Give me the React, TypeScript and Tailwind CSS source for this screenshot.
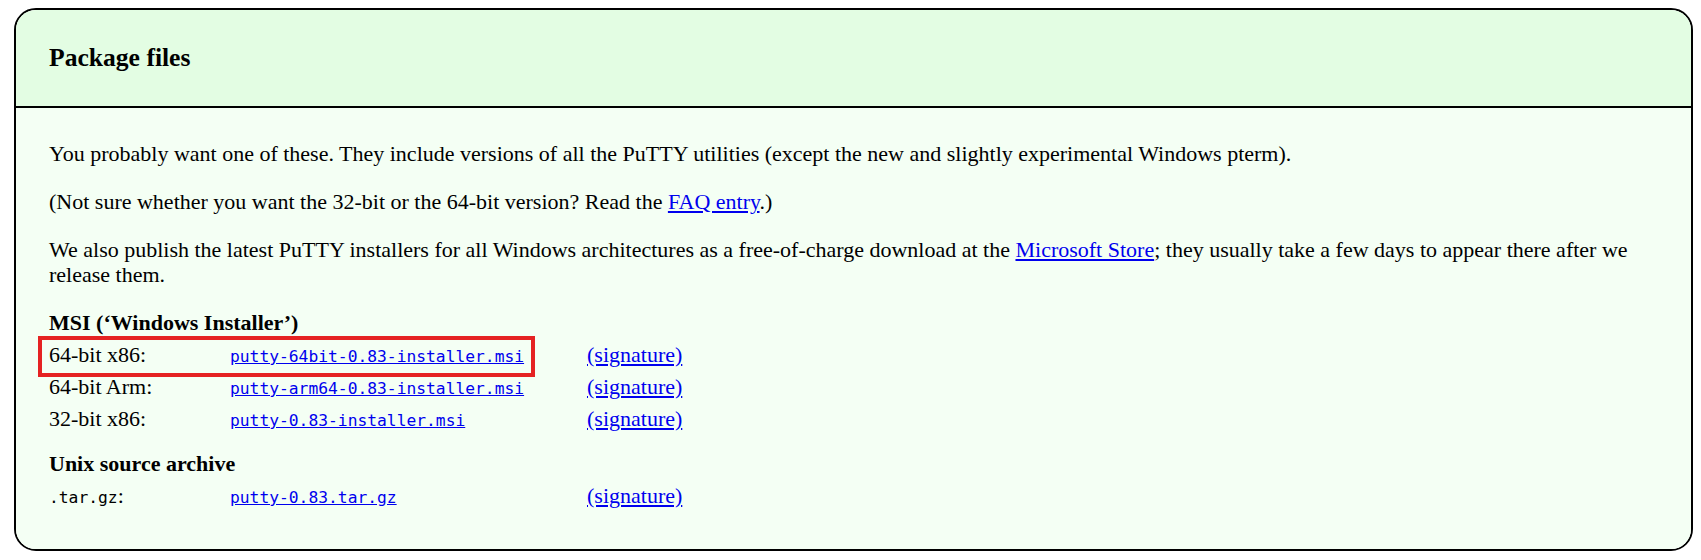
const serif = { fontFamily: '"Liberation Serif", "Times New Roman", serif' };

const linkCls = "text-[#0000ee] underline";
const monoCls = "font-['DejaVu_Sans_Mono',monospace] text-[16.3px]";

interface FileRow {
  label: string;
  file: string;
  mono?: boolean;
  highlight?: boolean;
}

const msiRows: FileRow[] = [
  { label: "64-bit x86:", file: "putty-64bit-0.83-installer.msi", highlight: true },
  { label: "64-bit Arm:", file: "putty-arm64-0.83-installer.msi" },
  { label: "32-bit x86:", file: "putty-0.83-installer.msi" },
];

function Row({ row }: { row: FileRow }) {
  return (
    <div className="relative flex items-baseline h-[32px] leading-[32px]">
      {row.highlight && (
        <div className="absolute left-[-11px] top-[-3px] w-[497px] h-[41px] border-4 border-[#e52222]" />
      )}
      <div className="w-[181px]">
        {row.mono ? (
          <>
            <span className={monoCls}>.tar.gz</span>:
          </>
        ) : (
          row.label
        )}
      </div>
      <div className="w-[357px]">
        <a href="#" className={`${linkCls} ${monoCls}`}>
          {row.file}
        </a>
      </div>
      <a href="#" className={linkCls}>
        (signature)
      </a>
    </div>
  );
}

export default function App() {
  return (
    <div className="min-h-screen bg-white pt-[8px] pl-[14px] pr-[8px]" style={serif}>
      <div className="border-2 border-black rounded-[22px] overflow-hidden text-black">
        <div className="h-[98px] bg-[#e3fde3] border-b-2 border-black flex items-center px-[33px]">
          <h2 className="text-[25.6px] font-bold">Package files</h2>
        </div>
        <div className="bg-[#f4fff4] pl-[33px] pr-[33px] pt-[33px] pb-[37px] text-[22px] leading-[25px]">
          <p>
            You probably want one of these. They include versions of all the PuTTY utilities
            (except the new and slightly experimental Windows pterm).
          </p>
          <p className="mt-[23px]">
            (Not sure whether you want the 32-bit or the 64-bit version? Read the{" "}
            <a href="#" className={linkCls}>FAQ entry</a>.)
          </p>
          <p className="mt-[23px]">
            We also publish the latest PuTTY installers for all Windows architectures as a
            free-of-charge download at the{" "}
            <a href="#" className={linkCls}>Microsoft Store</a>; they usually take a few days to
            appear there after we release them.
          </p>

          <h3 className="mt-[23px] font-bold">MSI (‘Windows Installer’)</h3>
          <div className="mt-[4px]">
            {msiRows.map((r) => (
              <Row key={r.file} row={r} />
            ))}
          </div>

          <h3 className="mt-[16px] font-bold">Unix source archive</h3>
          <div className="mt-[4px]">
            <Row row={{ label: ".tar.gz:", file: "putty-0.83.tar.gz", mono: true }} />
          </div>
        </div>
      </div>
    </div>
  );
}
